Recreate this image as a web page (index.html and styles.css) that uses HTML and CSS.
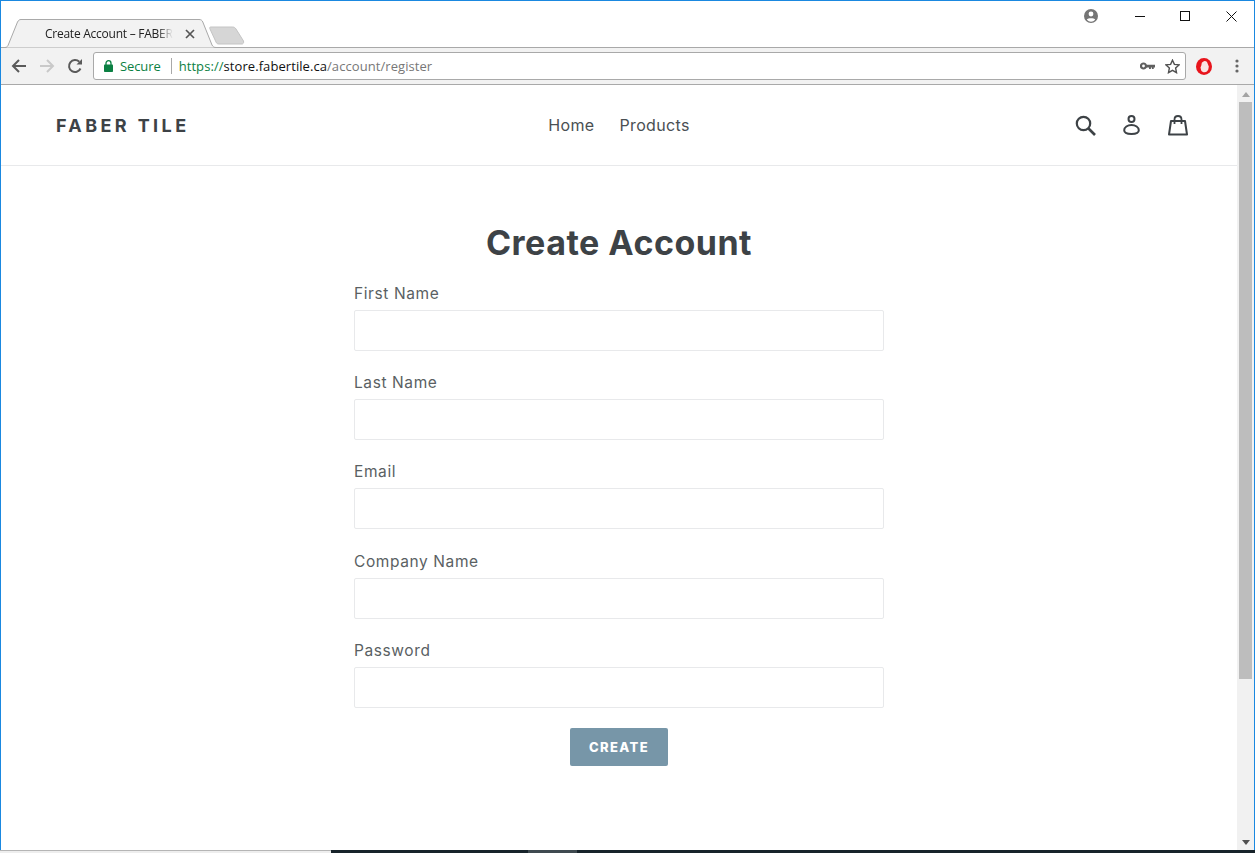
FILE: index.html
```html
<!DOCTYPE html>
<html lang="en">
<head>
<meta charset="utf-8">
<title>Create Account – FABER TILE</title>
<link rel="stylesheet" href="styles.css">
</head>
<body>
<div class="window">
  <div class="browser">
    <div class="tabstrip">
      <div class="tab">
        <svg class="tab-shape" width="206" height="29" viewBox="0 0 206 29"><path d="M-3 28.500H1C2.500 28.500 3.500 27.500 4 26.500L13.500 3C14.500 1.200 15.500 .5 17 .5H195C197 .5 198 1.200 198.800 3L208 26C209 27.800 210 28.500 212 28.500" fill="#f2f2f2" stroke="#a9a9a9"/></svg>
        <span class="tab-title">Create Account – FABER</span>
        <svg class="tab-close" width="10" height="10" viewBox="0 0 10 10"><path d="M1 1l8 8M9 1l-8 8" stroke="#555" stroke-width="1.700"/></svg>
      </div>
      <svg class="new-tab" width="36" height="19" viewBox="0 0 36 19"><path d="M1.500 1H23.500C25 1 26 1.500 27 3L34.500 15C35 17 34 18 33 18H10C8.500 18 7.500 17.500 7 16L1 3C.5 2 .5 1 1.500 1Z" fill="#d6d6d6" stroke="#c4c4c4"/></svg>
      <div class="spacer"></div>
      <svg class="profile" width="14" height="14" viewBox="0 0 14 14"><circle cx="7" cy="7" r="7" fill="#757575"/><circle cx="7" cy="5" r="2.400" fill="#fff"/><path d="M2.800 10.600C4 8.800 10 8.800 11.200 10.600C10 12.200 8.500 12.800 7 12.800S4 12.200 2.800 10.600Z" fill="#fff"/></svg>
      <div class="winctl"><svg width="10" height="10" viewBox="0 0 10 10"><path d="M0 5.500H10" stroke="#111"/></svg></div>
      <div class="winctl winctl-max"><svg width="10" height="10" viewBox="0 0 10 10"><rect x=".5" y=".5" width="9" height="9" fill="none" stroke="#111"/></svg></div>
      <div class="winctl"><svg width="11" height="11" viewBox="0 0 11 11"><path d="M.5 .5l10 10M10.500 .5l-10 10" stroke="#111"/></svg></div>
    </div>
    <div class="toolbar">
      <svg class="nav-btn" width="16" height="16" viewBox="0 0 16 16"><path d="M15 8H2M8 2L2 8l6 6" fill="none" stroke="#5a5a5a" stroke-width="2"/></svg>
      <svg class="nav-btn" width="16" height="16" viewBox="0 0 16 16"><path d="M1 8h13M8 2l6 6-6 6" fill="none" stroke="#c9c9c9" stroke-width="2"/></svg>
      <svg class="nav-btn" width="16" height="16" viewBox="0 0 16 16"><path d="M13.500 10.500A6 6 0 1 1 12.300 3.800" fill="none" stroke="#5a5a5a" stroke-width="2"/><path d="M9.500 6.500H15V1Z" fill="#5a5a5a"/></svg>
      <div class="omnibox">
        <svg class="lock" width="9" height="12" viewBox="0 0 9 12"><path d="M2 5V3.200a2.500 2.500 0 0 1 5 0V5" fill="none" stroke="#0b8043" stroke-width="1.300"/><rect y="4.500" width="9" height="7.500" rx=".8" fill="#0b8043"/></svg>
        <span class="secure">Secure</span>
        <span class="divider"></span>
        <span class="url"><span class="scheme">https://</span><span class="host">store.fabertile.ca</span><span class="path">/account/register</span></span>
        <div class="spacer"></div>
        <svg class="key" width="15" height="8" viewBox="0 0 15 8"><circle cx="3.500" cy="4" r="2.500" fill="none" stroke="#5f5f5f" stroke-width="2.200"/><path d="M6 2.800h9v2.700h-1.300V7h-1.800V5.500h-1V7H9V5.500H6Z" fill="#5f5f5f"/></svg>
        <svg class="star" width="15" height="15" viewBox="0 0 15 15"><path d="M7.500 1.200l1.900 4.200 4.600.5-3.400 3.100.9 4.600-4-2.300-4 2.300.9-4.600L1 5.900l4.600-.5Z" fill="none" stroke="#4f4f4f" stroke-width="1.400"/></svg>
      </div>
      <svg class="opera" width="16" height="17" viewBox="0 0 16 17"><ellipse cx="8" cy="8.500" rx="8" ry="8.500" fill="#e8141c"/><path d="M4.500 9.500L5.300 7.500 5.800 4.800 7 3.800 8.500 3 10 3.300 11 4 11.800 6 12.800 8.500 12.300 11.500C11.500 13 10.500 14.300 8.500 14.300 7 14.300 5.800 13.500 5.200 12.500Z" fill="#f9e4e4"/></svg>
      <svg class="menu" width="4" height="14" viewBox="0 0 4 14"><circle cx="2" cy="2" r="1.600" fill="#666"/><circle cx="2" cy="7" r="1.600" fill="#666"/><circle cx="2" cy="12" r="1.600" fill="#666"/></svg>
    </div>
  </div>
  <div class="viewport">
    <div class="page">
      <header class="site-header">
        <a class="logo" href="#">FABER TILE</a>
        <nav class="site-nav"><a href="#">Home</a><a href="#">Products</a></nav>
        <div class="site-icons">
          <svg class="icon-search" width="21" height="21" viewBox="0 0 21 21"><circle cx="8.500" cy="8.500" r="6.700" fill="none" stroke="#3d4246" stroke-width="2.200"/><path d="M13.500 13.500L20 20" stroke="#3d4246" stroke-width="2.600"/></svg>
          <svg class="icon-user" width="17" height="20" viewBox="0 0 17 20"><circle cx="8.500" cy="4" r="3" fill="none" stroke="#3d4246" stroke-width="2"/><path d="M8.500 10C4.500 10 1.200 12.300 1.200 15.300C1.200 17.700 4.500 19 8.500 19S15.800 17.700 15.800 15.300C15.800 12.300 12.500 10 8.500 10Z" fill="none" stroke="#3d4246" stroke-width="2"/></svg>
          <svg class="icon-bag" width="20" height="21" viewBox="0 0 20 21"><path d="M3 6H17L19 19.500H1Z" fill="none" stroke="#3d4246" stroke-width="2" stroke-linejoin="round"/><path d="M6.500 9V4.500C6.500 2.300 8 1 10 1S13.500 2.300 13.500 4.500V9" fill="none" stroke="#3d4246" stroke-width="1.800"/></svg>
        </div>
      </header>
      <main class="content">
        <h1>Create Account</h1>
        <form class="form">
          <div class="field"><label for="f1">First Name</label><input id="f1" type="text"></div>
          <div class="field"><label for="f2">Last Name</label><input id="f2" type="text"></div>
          <div class="field"><label for="f3">Email</label><input id="f3" type="email"></div>
          <div class="field"><label for="f4">Company Name</label><input id="f4" type="text"></div>
          <div class="field"><label for="f5">Password</label><input id="f5" type="password"></div>
          <button class="btn" type="button">CREATE</button>
        </form>
      </main>
    </div>
    <div class="scrollbar">
      <div class="arrow-up"></div>
      <div class="thumb"></div>
      <div class="spacer"></div>
      <div class="arrow-down"></div>
    </div>
  </div>
  <div class="taskbar">
    <div class="task-light"></div>
    <div class="task-dark"></div>
    <div class="task-active"></div>
    <div class="task-dark task-rest"></div>
  </div>
</div>
</body>
</html>
```

FILE: styles.css
```css
* { box-sizing: border-box; }
html, body { margin: 0; height: 100%; overflow: hidden; }
body { background: #fff; font-family: "Inter", "Liberation Sans", sans-serif; color: #3d4246; }
a { color: inherit; text-decoration: none; }
.spacer { flex: 1; }

.window { width: 1255px; height: 853px; display: flex; flex-direction: column; border: solid #1a88e0; border-width: 1px 1px 0 1px; }

.browser { height: 84px; flex: none; }
.tabstrip { height: 47px; display: flex; align-items: flex-start; background: #fff; border-bottom: 1px solid #a9a9a9; }
.tab { width: 206px; height: 29px; margin: 18px 0 -1px 3px; padding-left: 41px; display: flex; align-items: center; position: relative; font: 12px/1 "Open Sans", "Liberation Sans", sans-serif; color: #222; }
.tab-shape { position: absolute; left: 0; top: 0; overflow: visible; }
.tab-title { position: relative; width: 128px; white-space: nowrap; letter-spacing: -.25px; -webkit-mask-image: linear-gradient(to right, #000 88%, transparent 100%); mask-image: linear-gradient(to right, #000 88%, transparent 100%); }
.tab-close { position: relative; margin-left: 12px; }
.new-tab { margin: 25px 0 0 -1px; }
.profile { margin: 8px 19.500px 0 0; }
.winctl { width: 45.500px; height: 30px; display: flex; align-items: center; justify-content: center; }
.winctl-max { padding-right: 2px; }

.toolbar { height: 37px; background: #f2f2f2; border-bottom: 1px solid #a9a9a9; display: flex; align-items: center; padding: 0 0 0 10px; }
.nav-btn { margin-right: 12px; flex: none; }
.omnibox { width: 1093px; height: 28px; margin-left: -2px; background: #fff; border: 1px solid #a9a9a9; border-radius: 3px; display: flex; align-items: center; padding: 0 5.500px 0 10px; font: 14px/1 "Liberation Sans", sans-serif; }
.lock { flex: none; }
.secure { color: #0b8043; margin-left: 7px; letter-spacing: -.1px; font-family: "Open Sans", sans-serif; font-size: 13px; }
.divider { width: 1px; height: 16px; background: #a9a9a9; margin: 0 7px 0 10px; }
.url { white-space: nowrap; font-family: "Open Sans", sans-serif; font-size: 13px; letter-spacing: .07px; }
.scheme { color: #0b8043; }
.host { color: #111; }
.path { color: #777; }
.key { margin-right: 10px; }
.opera { margin-left: 10px; flex: none; }
.menu { margin-left: 23px; flex: none; }

.viewport { height: 765px; flex: none; display: flex; }
.page { width: 1236px; flex: none; display: flex; flex-direction: column; }
.site-header { height: 81px; flex: none; border-bottom: 1px solid #e8e9eb; display: grid; grid-template-columns: 1fr auto 1fr; align-items: center; padding: 0 49px; }
.logo { margin-left: 6px; font-size: 18px; font-weight: 700; letter-spacing: 3.400px; color: #3d4246; font-family: "Inter", "Liberation Sans", sans-serif; }
.site-nav { display: flex; gap: 25px; font-size: 16px; letter-spacing: .35px; color: #4a4f53; line-height: 20px; }
.site-icons { display: flex; align-items: center; justify-content: flex-end; }
.icon-search { margin-right: 27px; }
.icon-user { margin-right: 28px; }

.content { width: 530px; margin: 0 auto; flex: 1; }
h1 { margin: 57px 0 0; font-size: 34px; line-height: 40px; font-weight: 700; text-align: center; letter-spacing: .5px; color: #3d4246; }
.form { display: flex; flex-direction: column; }
.field { display: flex; flex-direction: column; height: 89.300px; }
.field label { margin-top: 21.300px; height: 22px; font-size: 15.500px; line-height: 22px; color: #5a5f63; letter-spacing: .6px; flex: none; }
.field input { height: 41px; margin-top: 5px; flex: none; border: 1px solid #e8e9eb; border-radius: 2px; background: #fff; }
.field:first-child label { margin-top: 0; }
.field:first-child { height: 68px; margin-top: 19.700px; }
.btn { align-self: center; width: 98px; height: 38px; margin-top: 20px; padding: 1px 0 0; border: 0; border-radius: 2px; background: #7796a8; color: #fff; font: 800 13px/1 "Inter", sans-serif; letter-spacing: 1.400px; }

.scrollbar { width: 17px; flex: none; background: #f1f1f1; display: flex; flex-direction: column; align-items: center; }
.arrow-up { width: 0; height: 0; margin-top: 7px; border: solid transparent; border-width: 0 4px 5px; border-bottom-color: #a3a3a3; }
.thumb { width: 13px; height: 577px; margin-top: 5px; background: #bdbdbd; }
.arrow-down { width: 0; height: 0; margin: 0 0 5px; border: solid transparent; border-width: 5px 4px 0; border-top-color: #505050; }

.taskbar { height: 3px; flex: none; margin: 0 -1px; display: flex; }
.task-light { width: 331px; background: #eeeeee; border-top: 1px solid #b5b5b5; }
.task-dark { width: 197px; background: #17232a; }
.task-active { width: 49px; background: #3f4a50; }
.task-rest { flex: 1; }
```
